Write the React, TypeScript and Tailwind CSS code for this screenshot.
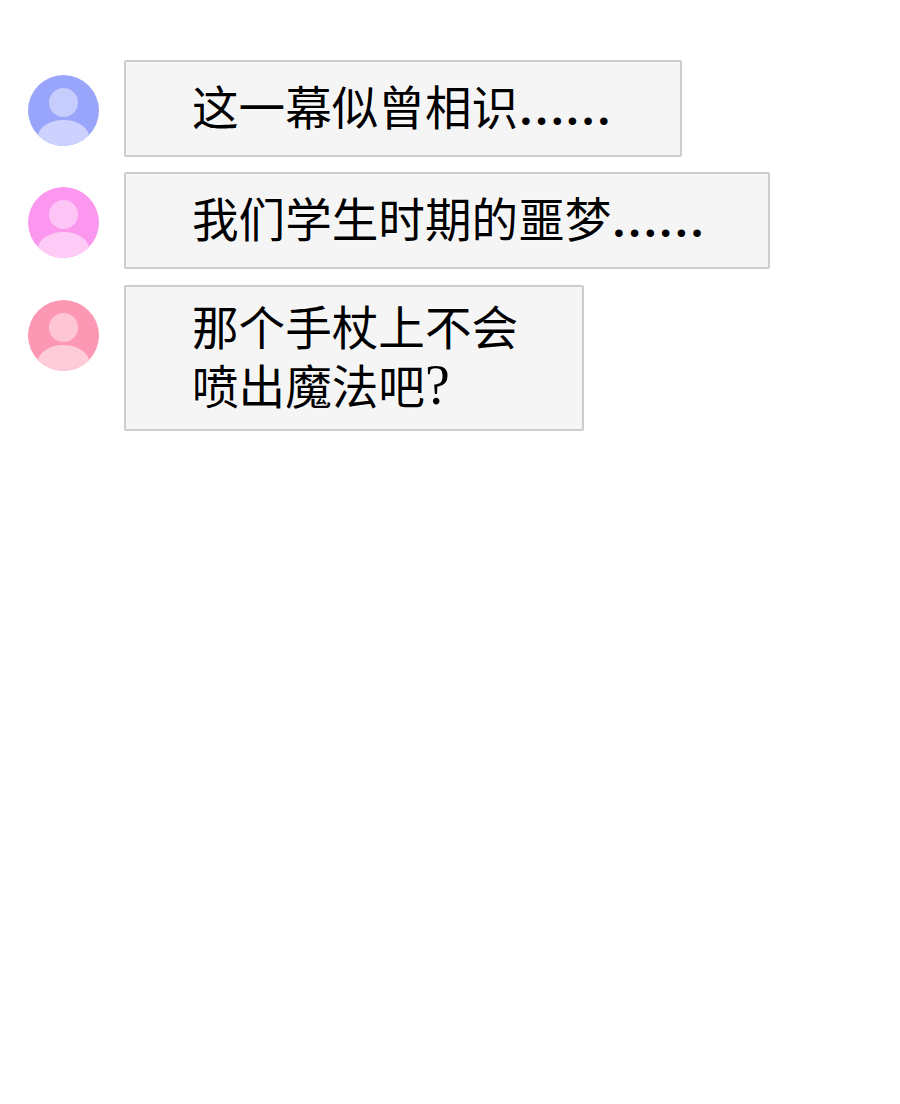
const font = "[font-family:'Liberation_Serif','Noto_Sans_CJK_SC',serif]";

function Avatar({ id, bg, fg, body }: { id: string; bg: string; fg: string; body: string }) {
  return (
    <svg width="72" height="72" viewBox="0 0 72 72" className="block shrink-0">
      <defs>
        <clipPath id={id}>
          <circle cx="35.5" cy="35.5" r="35.5" />
        </clipPath>
      </defs>
      <circle cx="35.5" cy="35.5" r="35.5" fill={bg} />
      <circle cx="35.5" cy="27.5" r="14.5" fill={fg} />
      <g clipPath={`url(#${id})`}>
        <ellipse cx="35.5" cy="63" rx="26" ry="18" fill={body} />
      </g>
    </svg>
  );
}

function Row({
  id, bg, fg, body, width, height, mt, children, avatarMt,
}: {
  id: string; bg: string; fg: string; body: string; width: string; height: string; mt: string; avatarMt: string; children: React.ReactNode;
}) {
  return (
    <div className={`flex items-start ${mt}`}>
      <div className={`ml-[28px] w-[72px] shrink-0 ${avatarMt}`}>
        <Avatar id={id} bg={bg} fg={fg} body={body} />
      </div>
      <div
        className={`ml-[24px] ${width} ${height} rounded-[2px] border-2 border-[#cccccc] bg-[#f5f5f5] pl-[66px] flex flex-col justify-center`}
      >
        <p className={`${font} text-[46.6px] leading-[56px] font-normal text-black whitespace-nowrap [text-shadow:0_0_3px_#ffffff]`}>
          {children}
        </p>
      </div>
    </div>
  );
}

export default function App() {
  return (
    <div className="w-[900px] h-[1104px] bg-white pt-[60px] overflow-hidden">
      <Row id="a1" bg="#99a5fb" fg="#c6cdfd" body="#ccd2fd" width="w-[558px]" height="h-[97px]" mt="" avatarMt="mt-[15px]">
        这一幕似曾相识<span className="font-bold">……</span>
      </Row>
      <Row id="a2" bg="#fb97ee" fg="#fdc4f6" body="#fdcbf6" width="w-[646px]" height="h-[97px]" mt="mt-[15px]" avatarMt="mt-[15px]">
        我们学生时期的噩梦<span className="font-bold">……</span>
      </Row>
      <Row id="a3" bg="#fd98b4" fg="#fec6d5" body="#fecbd9" width="w-[460px]" height="h-[146px]" mt="mt-[16px]" avatarMt="mt-[15px]">
        那个手杖上不会
        <br />
        喷出魔法吧<span className="text-[56px] leading-none">?</span>
      </Row>
    </div>
  );
}
